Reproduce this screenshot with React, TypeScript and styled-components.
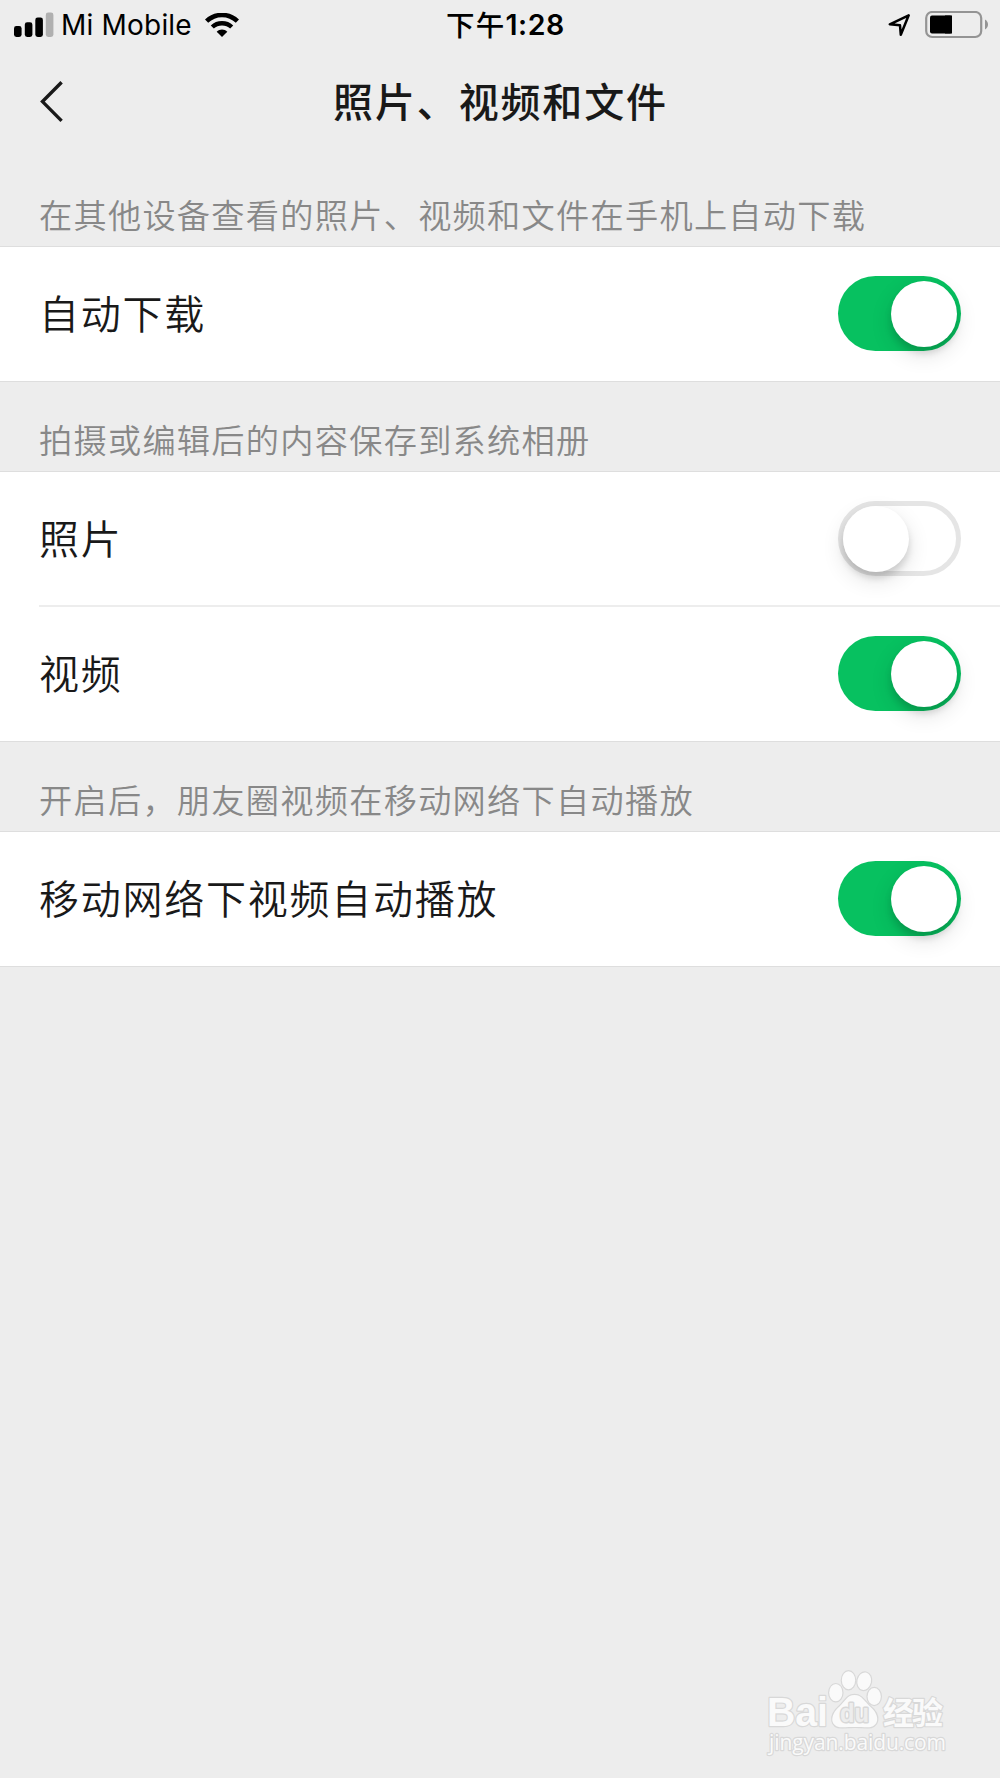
import React from "react";
import styled, { createGlobalStyle } from "styled-components";

const GlobalStyle = createGlobalStyle`
  html, body { margin: 0; padding: 0; background: #ededed; }
  * { box-sizing: border-box; }
`;

const Screen = styled.div`
  display: flex;
  flex-direction: column;
  width: 1000px;
  height: 1778px;
  overflow: hidden;
  background: #ededed;
  color: #191919;
  font-family: Inter, "Noto Sans CJK SC", sans-serif;
`;

const StatusBar = styled.header`
  display: grid;
  grid-template-columns: 1fr auto 1fr;
  align-items: center;
  height: 50px;
  padding: 0 12px 0 14px;
  color: #000;
`;

const Carrier = styled.div`
  display: flex;
  align-items: center;
`;

const CarrierName = styled.span`
  margin: 0 13px 0 7px;
  font-size: 28px;
  line-height: 50px;
  letter-spacing: 0.2px;
  white-space: nowrap;
`;

const Clock = styled.time`
  display: flex;
  align-items: center;
  margin-left: 9px;
  font-size: 28.5px;
  font-weight: 600;
  line-height: 50px;
  letter-spacing: 0.6px;
`;

const Meridiem = styled.span`
  padding-bottom: 2px;
  font-family: "Noto Sans CJK SC", sans-serif;
  font-weight: 500;
  letter-spacing: 1.2px;
  line-height: 46px;
`;

const StatusIcons = styled.div`
  display: flex;
  align-items: center;
  justify-content: flex-end;
  gap: 14px;
`;

const NavBar = styled.nav`
  display: grid;
  grid-template-columns: 200px 1fr 200px;
  align-items: center;
  height: 104px;
`;

const BackButton = styled.button`
  display: flex;
  align-items: center;
  width: 80px;
  height: 80px;
  padding: 0 0 0 39px;
  border: 0;
  background: none;
`;

const Title = styled.h1`
  margin: 0;
  padding: 0 0 4px 1px;
  font-family: "Noto Sans CJK SC", sans-serif;
  font-size: 40px;
  font-weight: 500;
  line-height: 60px;
  letter-spacing: 1.85px;
  text-align: center;
  white-space: nowrap;
`;

const Caption = styled.h2<{ $first?: boolean }>`
  display: flex;
  align-items: flex-end;
  height: ${(p) => (p.$first ? 92 : 89)}px;
  margin: 0;
  padding: 0 39px 15px;
  color: #888;
  font-family: "Noto Sans CJK SC", sans-serif;
  font-size: 33.2px;
  font-weight: 350;
  line-height: 34px;
  letter-spacing: 1.28px;
  white-space: nowrap;
`;

const Group = styled.section`
  border-top: 1px solid #dedede;
  border-bottom: 1px solid #dedede;
  background: #fff;
`;

const Row = styled.div`
  display: flex;
  align-items: center;
  justify-content: space-between;
  height: 134px;
  padding: 0 39px 1px 39px;
`;

const Divider = styled.hr`
  height: 2px;
  margin: -1px 0 0 39px;
  border: 0;
  background: #ededed;
`;

const Label = styled.span`
  padding-bottom: 4px;
  font-family: "Noto Sans CJK SC", sans-serif;
  font-size: 40px;
  font-weight: 350;
  line-height: 60px;
  letter-spacing: 1.75px;
`;

const Switch = styled.button<{ $on: boolean }>`
  display: flex;
  align-items: center;
  justify-content: ${(p) => (p.$on ? "flex-end" : "flex-start")};
  width: 123px;
  height: 75px;
  padding: 0 ${(p) => (p.$on ? 4 : 0)}px 0 0;
  border: ${(p) => (p.$on ? "0" : "5px solid #e5e5e5")};
  border-radius: 38px;
  background: ${(p) => (p.$on ? "#07c160" : "#fff")};
`;

const Knob = styled.span`
  width: 66px;
  height: 66px;
  border-radius: 50%;
  background: #fff;
  box-shadow: 0 8px 22px rgba(0, 0, 0, 0.12), 0 6px 7px rgba(0, 0, 0, 0.13);
`;

const Watermark = styled.footer`
  margin: auto 51px 19px auto;
  width: 184px;
  height: 92px;
`;

const sections = [
  {
    caption: "在其他设备查看的照片、视频和文件在手机上自动下载",
    rows: [{ label: "自动下载", on: true }],
  },
  {
    caption: "拍摄或编辑后的内容保存到系统相册",
    rows: [
      { label: "照片", on: false },
      { label: "视频", on: true },
    ],
  },
  {
    caption: "开启后，朋友圈视频在移动网络下自动播放",
    rows: [{ label: "移动网络下视频自动播放", on: true }],
  },
];

const SignalIcon = () => (
  <svg width="40" height="26" viewBox="0 0 40 26">
    <rect x="0" y="14" width="7.6" height="11" rx="2.4" />
    <rect x="10.8" y="10.3" width="7.6" height="14.7" rx="2.4" />
    <rect x="21.3" y="5.5" width="7.6" height="19.5" rx="2.4" />
    <rect x="31.8" y="0.5" width="7.6" height="24.5" rx="2.4" fill="#b0b0b0" />
  </svg>
);

const WifiIcon = () => (
  <svg width="34" height="25" viewBox="0 0 34 25" fill="none" stroke="#000">
    <path d="M1.6 8.2C10.2-.1 23.8-.1 32.4 8.2" strokeWidth="4.6" />
    <path d="M7.3 14C12.6 8.9 21.4 8.9 26.7 14" strokeWidth="4.4" />
    <path d="M11.7 18.7C14.7 15.9 19.3 15.9 22.3 18.7L17 24Z" fill="#000" stroke="none" />
  </svg>
);

const LocationIcon = () => (
  <svg width="23" height="23" viewBox="0 0 23 23" fill="none" stroke="#000" strokeWidth="2.5" strokeLinejoin="round">
    <path d="M20.7 1.3L1.8 10.3L12 11.3L12.8 20.8Z" />
  </svg>
);

const BatteryIcon = () => (
  <svg width="63" height="28" viewBox="0 0 63 28">
    <rect x="1.2" y="1" width="55" height="25" rx="6" fill="none" stroke="#949494" strokeWidth="2.2" />
    <rect x="5" y="4.5" width="22" height="18" rx="2" />
    <rect x="20" y="4.5" width="7" height="18" />
    <path d="M60 8.5C64 11 64 16 60 18.5Z" fill="#949494" />
  </svg>
);

const BackIcon = () => (
  <svg width="26" height="42" viewBox="0 0 26 42" fill="none" stroke="#191919" strokeWidth="3.4">
    <path d="M22.6 1.3L3.5 20.6L22.6 39.9" />
  </svg>
);

const BaiduMark = () => (
  <svg width="184" height="92" viewBox="0 0 184 92" fill="#fafafa" stroke="#d8d8d8" strokeWidth="2.4" paintOrder="stroke" strokeLinejoin="round">
    <text x="2" y="58.5" fontFamily="Liberation Sans, sans-serif" fontWeight="700" fontSize="40" textLength="61" lengthAdjust="spacingAndGlyphs">Bai</text>
    <ellipse cx="70.8" cy="25.7" rx="6.6" ry="8.6" />
    <ellipse cx="83.5" cy="13.2" rx="6.6" ry="9" />
    <ellipse cx="99.2" cy="14.2" rx="6.8" ry="8.8" transform="rotate(12 99.2 14.2)" />
    <ellipse cx="109.2" cy="29.5" rx="6.6" ry="8.5" />
    <path d="M89.5 28C97 28 99.5 34.5 105 39.5C116.500 49 113.500 61 102 60.300C95 59.800 85 59.800 78 60.300C65.500 61 63.500 49 74.500 39.500C80 34.500 82 28 89.500 28Z" />
    <text x="75" y="55" fontFamily="Liberation Sans, sans-serif" fontSize="25" fontWeight="700" textLength="29" lengthAdjust="spacingAndGlyphs" fill="#ededed" strokeWidth="3">du</text>
    <text x="118" y="56.5" fontFamily="Noto Sans CJK SC, sans-serif" fontSize="31" fontWeight="700" textLength="60">经验</text>
    <text x="4" y="83" fontFamily="Open Sans, sans-serif" fontSize="21" textLength="177">jingyan.baidu.com</text>
  </svg>
);

export default function App() {
  return (
    <>
      <GlobalStyle />
      <Screen>
        <StatusBar>
          <Carrier>
            <SignalIcon />
            <CarrierName>Mi Mobile</CarrierName>
            <WifiIcon />
          </Carrier>
          <Clock>
            <Meridiem>下午</Meridiem>1:28
          </Clock>
          <StatusIcons>
            <LocationIcon />
            <BatteryIcon />
          </StatusIcons>
        </StatusBar>
        <NavBar>
          <BackButton aria-label="返回">
            <BackIcon />
          </BackButton>
          <Title>照片、视频和文件</Title>
        </NavBar>
        {sections.map((section, index) => (
          <React.Fragment key={section.caption}>
            <Caption $first={index === 0}>{section.caption}</Caption>
            <Group>
              {section.rows.map((row, i) => (
                <React.Fragment key={row.label}>
                  {i > 0 && <Divider />}
                  <Row>
                    <Label>{row.label}</Label>
                    <Switch $on={row.on} role="switch" aria-checked={row.on} aria-label={row.label}>
                      <Knob />
                    </Switch>
                  </Row>
                </React.Fragment>
              ))}
            </Group>
          </React.Fragment>
        ))}
        <Watermark>
          <BaiduMark />
        </Watermark>
      </Screen>
    </>
  );
}
